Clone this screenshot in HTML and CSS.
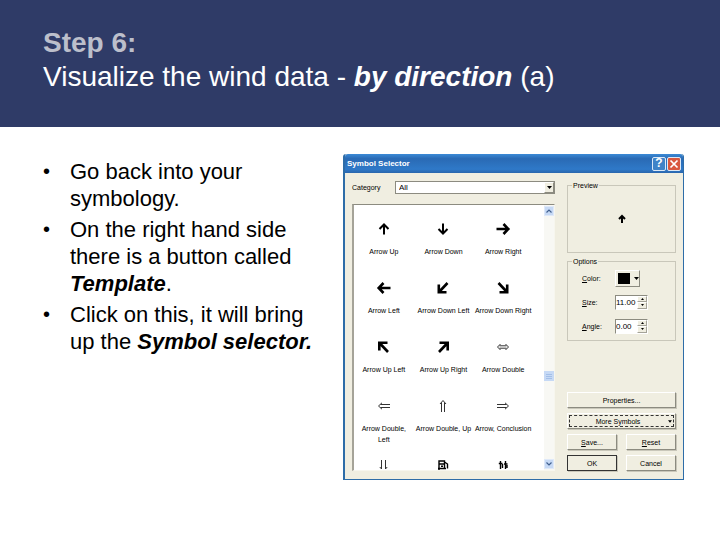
FILE: index.html
```html
<!DOCTYPE html>
<html lang="en">
<head>
    <meta charset="UTF-8">
    <meta name="viewport" content="width=device-width, initial-scale=1.0">
    <title>Step 6: Visualize the wind data</title>
    <link rel="stylesheet" href="styles.css">
</head>
<body>
    <header class="slide-header">
        <h1><span class="step">Step 6:</span><br>Visualize the wind data - <em>by direction</em> (a)</h1>
    </header>

    <main class="slide-body">
        <ul class="steps">
            <li>Go back into your symbology.</li>
            <li>On the right hand side there is a button called <em>Template</em>.</li>
            <li>Click on this, it will bring up the <em>Symbol selector.</em></li>
        </ul>

        <section class="dialog" aria-label="Symbol Selector">
            <div class="titlebar">
                <h2>Symbol Selector</h2>
                <button class="help" aria-label="Help">?</button>
                <button class="close" aria-label="Close">
                    <svg width="10" height="10" viewBox="0 0 10 10"><path d="M1.5 1.5L8.5 8.5M8.5 1.5L1.5 8.5" stroke="#fff" stroke-width="1.7"/></svg>
                </button>
            </div>

            <div class="dialog-body">
                <div class="picker">
                    <div class="category">
                        <label for="category">Category</label>
                        <div class="select">
                            <select id="category"><option>All</option></select>
                            <span class="drop"><svg width="5" height="3" viewBox="0 0 5 3"><path d="M0 0H5L2.5 3Z"/></svg></span>
                        </div>
                    </div>

                    <div class="symbols">
                        <div class="symbol-grid">
                            <!-- Solid arrows -->
                            <div class="symbol">
                                <svg viewBox="0 0 16 16"><path d="M8 13.5V4M3.5 8L8 3.5L12.5 8" class="solid"/></svg>
                                <span>Arrow Up</span>
                            </div>
                            <div class="symbol">
                                <svg viewBox="0 0 16 16"><path d="M8 2.5V12M3.5 8L8 12.5L12.5 8" class="solid"/></svg>
                                <span>Arrow Down</span>
                            </div>
                            <div class="symbol">
                                <svg viewBox="0 0 16 16"><path d="M1.5 8H13M8.5 3L13.3 8L8.5 13" class="heavy"/></svg>
                                <span>Arrow Right</span>
                            </div>
                            <div class="symbol">
                                <svg viewBox="0 0 16 16"><path d="M14.5 8H3M7.5 3L2.7 8L7.5 13" class="heavy"/></svg>
                                <span>Arrow Left</span>
                            </div>
                            <div class="symbol">
                                <svg viewBox="0 0 16 16"><path d="M12.5 3L4.5 11.5M3.8 4.5V12.2H11.5" class="heavy"/></svg>
                                <span>Arrow Down Left</span>
                            </div>
                            <div class="symbol">
                                <svg viewBox="0 0 16 16"><path d="M3.5 3L11.5 11.5M12.2 4.5V12.2H4.5" class="heavy"/></svg>
                                <span>Arrow Down Right</span>
                            </div>
                            <div class="symbol">
                                <svg viewBox="0 0 16 16"><path d="M12 13L4 4.5M3.3 11.5V3.8H11.5" class="heavy"/></svg>
                                <span>Arrow Up Left</span>
                            </div>
                            <div class="symbol">
                                <svg viewBox="0 0 16 16"><path d="M4 13L12 4.5M12.7 11.5V3.8H4.5" class="heavy"/></svg>
                                <span>Arrow Up Right</span>
                            </div>

                            <!-- Outlined arrows -->
                            <div class="symbol">
                                <svg viewBox="0 0 16 16"><path d="M4.5 6.8H11.5M4.5 9.2H11.5M5.5 5L2.5 8L5.5 11M10.5 5L13.5 8L10.5 11" class="thin"/></svg>
                                <span>Arrow Double</span>
                            </div>
                            <div class="symbol">
                                <svg viewBox="0 0 16 16"><path d="M14 6.5H4.5M14 9.5H4.5M6 4.8L2.5 8L6 11.2" class="thin"/></svg>
                                <span>Arrow Double,<br>Left</span>
                            </div>
                            <div class="symbol">
                                <svg viewBox="0 0 16 16"><path d="M6.5 14V4.5M9.5 14V4.5M5 6L8 2.5L11 6" class="thin"/></svg>
                                <span>Arrow Double, Up</span>
                            </div>
                            <div class="symbol">
                                <svg viewBox="0 0 16 16"><path d="M2 6.5H11.5M2 9.5H11.5M10 4.8L13.5 8L10 11.2" class="thin"/></svg>
                                <span>Arrow, Conclusion</span>
                            </div>
                            <div class="symbol">
                                <svg viewBox="0 0 16 16"><path d="M5.5 3V12M9.5 3V12M3.8 10L5.5 12M11.2 10L9.5 12" class="thin"/></svg>
                            </div>
                            <div class="symbol">
                                <svg viewBox="0 0 16 16"><path d="M4 13V4H9.5V11.5M3 11.5H11M4 7H9.5M6 9.3H8M9.5 5L12.5 7V11.5" class="pump"/></svg>
                            </div>
                            <div class="symbol">
                                <svg viewBox="0 0 16 16"><path d="M5.5 4V12M3.8 6.5H7.5M7.5 7V11M10.5 4V12M9 7H12.5M12 8V11" class="pump"/></svg>
                            </div>
                        </div>

                        <div class="scrollbar">
                            <button aria-label="Scroll up"><svg width="6" height="4" viewBox="0 0 6 4"><path d="M.5 3.5L3 1L5.5 3.5" class="chevron"/></svg></button>
                            <span class="thumb"></span>
                            <button aria-label="Scroll down"><svg width="6" height="4" viewBox="0 0 6 4"><path d="M.5 .5L3 3L5.5 .5" class="chevron"/></svg></button>
                        </div>
                    </div>
                </div>

                <div class="side">
                    <fieldset class="preview">
                        <legend>Preview</legend>
                        <svg width="8" height="10" viewBox="0 0 8 10"><path d="M4 9V2M1 5L4 2L7 5" stroke="#000" stroke-width="2" fill="none"/></svg>
                    </fieldset>

                    <fieldset class="options">
                        <legend>Options</legend>
                        <div class="option">
                            <label for="color"><u>C</u>olor:</label>
                            <button id="color" class="color"><span class="swatch"></span><svg width="5" height="3" viewBox="0 0 5 3"><path d="M0 0H5L2.5 3Z"/></svg></button>
                        </div>
                        <div class="option">
                            <label for="size"><u>S</u>ize:</label>
                            <div class="spinner">
                                <input id="size" type="text" value="11.00">
                                <div class="spin">
                                    <button aria-label="Increase size"><svg width="3" height="2" viewBox="0 0 3 2"><path d="M0 2H3L1.5 0Z"/></svg></button>
                                    <button aria-label="Decrease size"><svg width="3" height="2" viewBox="0 0 3 2"><path d="M0 0H3L1.5 2Z"/></svg></button>
                                </div>
                            </div>
                        </div>
                        <div class="option">
                            <label for="angle"><u>A</u>ngle:</label>
                            <div class="spinner">
                                <input id="angle" type="text" value="0.00">
                                <div class="spin">
                                    <button aria-label="Increase angle"><svg width="3" height="2" viewBox="0 0 3 2"><path d="M0 2H3L1.5 0Z"/></svg></button>
                                    <button aria-label="Decrease angle"><svg width="3" height="2" viewBox="0 0 3 2"><path d="M0 0H3L1.5 2Z"/></svg></button>
                                </div>
                            </div>
                        </div>
                    </fieldset>

                    <div class="actions">
                        <button class="btn wide">Properties...</button>
                        <button class="btn wide more"><span>More Symbols</span><svg width="4" height="3" viewBox="0 0 5 3"><path d="M0 0H5L2.5 3Z"/></svg></button>
                        <button class="btn"><u>S</u>ave...</button>
                        <button class="btn"><u>R</u>eset</button>
                        <button class="btn default">OK</button>
                        <button class="btn">Cancel</button>
                    </div>
                </div>
            </div>
        </section>
    </main>
</body>
</html>
```
FILE: styles.css
```css
* {
    box-sizing: border-box;
}

body {
    margin: 0;
    background-color: #fff;
    color: #000;
    font-family: "Liberation Sans", Arial, sans-serif;
}

.slide-header {
    background-color: #2f3b67;
    padding: 26px 43px 33px;
}

h1 {
    margin: 0;
    color: #fff;
    font-size: 28px;
    font-weight: normal;
    line-height: 34px;
}

.step {
    color: #bcbfcb;
    font-weight: bold;
}

em {
    font-weight: bold;
}

.slide-body {
    display: grid;
    grid-template-columns: 276fr 341fr;
    gap: 24px;
    align-items: start;
    padding: 27px 36px 27px 43px;
}

.steps {
    margin: 0;
    padding: 4px 0 0;
    list-style: none;
    font-size: 22px;
    line-height: 27px;
}

.steps li {
    display: flow-root;
    position: relative;
    padding-left: 27px;
    margin-bottom: 4px;
}

.steps li::before {
    content: "•";
    position: absolute;
    left: 0;
    font-size: 20px;
}

/* Dialog window */
.dialog {
    font-size: 7px;
    line-height: 9px;
    background-color: #f0eee1;
    border: 1px solid #2e6da8;
    border-top: none;
    border-left-width: 2px;
    border-radius: 3px 3px 0 0;
}

.dialog button,
.dialog select,
.dialog input {
    font: inherit;
    color: inherit;
    margin: 0;
    padding: 0;
    border-radius: 0;
}

.titlebar {
    display: flex;
    align-items: center;
    gap: 1px;
    height: 19px;
    padding: 0 2px;
    background: linear-gradient(#3b8ad6, #2a6ab4 25%, #2f79c8 80%, #2a66ad);
    border-radius: 3px 3px 0 0;
}

.titlebar h2 {
    flex: 1;
    margin: 0;
    color: #fff;
    font-size: 8px;
}

.dialog .titlebar button {
    display: grid;
    place-items: center;
    width: 14px;
    height: 14px;
    border: 1px solid #dce9f7;
    border-radius: 2px;
    color: #fff;
}

.dialog .titlebar .help {
    background-color: #3f83c8;
    font-size: 12px;
    font-weight: bold;
}

.titlebar .close {
    background-color: #d9583f;
}

.dialog-body {
    display: grid;
    grid-template-columns: 203fr 109fr;
    gap: 12px;
    padding: 8px 7px 8px 7px;
}

.picker {
    display: flex;
    flex-direction: column;
    gap: 10px;
    min-width: 0;
}

.category {
    display: flex;
    align-items: center;
}

.category label {
    width: 43px;
}

.select {
    position: relative;
    flex: 1;
    display: flex;
}

.dialog select {
    appearance: none;
    width: 100%;
    height: 13px;
    padding-left: 3px;
    font-size: 8px;
    background-color: #fff;
    border: 1px solid #8c8b80;
}

.drop {
    position: absolute;
    top: 1px;
    right: 1px;
    bottom: 1px;
    width: 10px;
    display: grid;
    place-items: center;
    background-color: #f0eee1;
    border: 1px solid #8c8b80;
    border-top-color: #fff;
    border-left-color: #fff;
    pointer-events: none;
}

/* Symbol list */
.symbols {
    display: flex;
    height: 267px;
    background-color: #fff;
    border: 1px solid #f7f6ee;
    border-top-color: #8c8b80;
    border-left: 2px solid #a5a398;
    overflow: hidden;
}

.symbol-grid {
    flex: 1;
    display: grid;
    grid-template-columns: repeat(3, 1fr);
    grid-auto-rows: 59px;
    padding: 16px 11px 0 0;
}

.symbol {
    display: flex;
    flex-direction: column;
    align-items: center;
    gap: 9px;
    min-width: 0;
    line-height: 11px;
    text-align: center;
    white-space: nowrap;
}

.symbol svg {
    flex: none;
    width: 16px;
    height: 16px;
    fill: none;
    stroke: #000;
}

.symbol .solid {
    stroke-width: 2;
}

.symbol .heavy {
    stroke-width: 2.6;
}

.symbol .thin {
    stroke: #333;
    stroke-width: 1;
}

.symbol .pump {
    stroke-width: 1.4;
}

.scrollbar {
    display: flex;
    flex-direction: column;
    width: 10px;
    padding: 1px 0;
    background-color: #f8f8f4;
}

.scrollbar button,
.thumb {
    height: 10px;
    background-color: #c6d9f5;
    border: 1px solid #dfe9f8;
}

.scrollbar button {
    display: grid;
    place-items: center;
}

.dialog .scrollbar button:last-child {
    margin-top: auto;
}

.chevron {
    fill: none;
    stroke: #41608f;
    stroke-width: 1.2;
}

.thumb {
    margin-top: 155px;
    background: repeating-linear-gradient(#c6d9f5 0 1px, #a3bfe8 1px 2px);
    border: 2px solid #c6d9f5;
}

/* Right-hand panel */
.side {
    display: flex;
    flex-direction: column;
    gap: 4px;
    min-width: 0;
}

fieldset {
    min-width: 0;
    margin: 0;
    padding: 0;
    border: 1px solid #c9c7ba;
}

legend {
    padding: 0 1px;
    margin-left: 4px;
}

.preview {
    height: 72px;
}

.preview svg {
    display: block;
    margin: 24px auto 0;
}

.options {
    height: 84px;
}

.option {
    display: flex;
    align-items: center;
    height: 24px;
    padding-left: 14px;
}

.option label {
    width: 33px;
}

.dialog .color {
    display: flex;
    align-items: center;
    gap: 4px;
    width: 25px;
    height: 17px;
    padding-left: 2px;
    background-color: #f0eee1;
    border: 1px solid #8c8b80;
    border-top-color: #fff;
    border-left-color: #fff;
}

.swatch {
    width: 12px;
    height: 11px;
    background-color: #000;
}

.spinner {
    display: flex;
    width: 33px;
    height: 15px;
    background-color: #fff;
    border: 1px solid #fff;
    border-top-color: #8c8b80;
    border-left-color: #8c8b80;
}

.dialog .spinner input {
    flex: 1;
    min-width: 0;
    font-size: 8px;
    background: none;
    border: none;
}

.spin {
    display: flex;
    flex-direction: column;
    width: 10px;
}

.spin button {
    flex: 1;
    display: grid;
    place-items: center;
    background-color: #f0eee1;
    border: 1px solid #a5a398;
    border-top-color: #fff;
    border-left-color: #fff;
}

.actions {
    display: grid;
    grid-template-columns: 1fr 1fr;
    gap: 5px 9px;
    margin-top: auto;
}

.btn {
    height: 16px;
    background-color: #f0eee1;
    border: 1px solid #8c8b80;
    border-top-color: #fff;
    border-left-color: #fff;
    box-shadow: 1px 1px 0 #c9c7ba;
}

.wide {
    grid-column: span 2;
}

.more {
    display: flex;
    align-items: center;
    outline: 1px dashed #333;
    outline-offset: -3px;
}

.more span {
    flex: 1;
}

.dialog .more {
    padding-right: 3px;
}

.default {
    border: 1px solid #333;
}
```
